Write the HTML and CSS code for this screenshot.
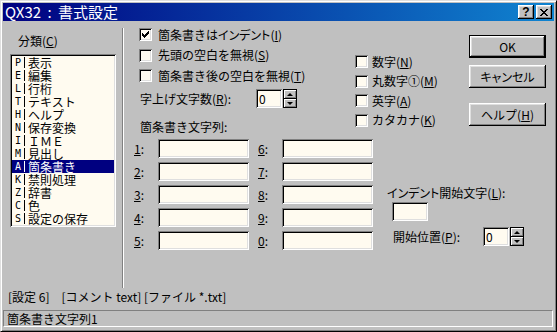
FILE: index.html
```html
<!DOCTYPE html>
<html lang="ja">
<head>
  <meta charset="UTF-8" />
  <title>QX32 : 書式設定</title>
  <link rel="stylesheet" href="styles.css">
</head>
<body>

<div class="window">
  <div class="titlebar">
    <span class="title">QX32 : 書式設定</span>
    <div class="title-buttons">
      <span class="tbtn tbtn-help">?</span>
      <span class="tbtn">
        <svg width="8" height="7" viewBox="0 0 8 7" shape-rendering="crispEdges"><path d="M0 0h2v1h-2zM6 0h2v1h-2zM1 1h2v1h-2zM5 1h2v1h-2zM2 2h4v1h-4zM3 3h2v1h-2zM2 4h4v1h-4zM1 5h2v1h-2zM5 5h2v1h-2zM0 6h2v1h-2zM6 6h2v1h-2z" fill="#000"/></svg>
      </span>
    </div>
  </div>

  <div class="content">
    <!-- category list -->
    <div class="category">
      <div class="cat-label">分類(<u>C</u>)</div>
      <ul class="listbox">
        <li><span class="key">P</span><span class="sep"></span>表示</li>
        <li><span class="key">E</span><span class="sep"></span>編集</li>
        <li><span class="key">L</span><span class="sep"></span>行桁</li>
        <li><span class="key">T</span><span class="sep"></span>テキスト</li>
        <li><span class="key">H</span><span class="sep"></span>ヘルプ</li>
        <li><span class="key">N</span><span class="sep"></span>保存変換</li>
        <li><span class="key">I</span><span class="sep"></span>ＩＭＥ</li>
        <li><span class="key">M</span><span class="sep"></span>見出し</li>
        <li class="selected"><span class="key">A</span><span class="sep"></span>箇条書き</li>
        <li><span class="key">K</span><span class="sep"></span>禁則処理</li>
        <li><span class="key">Z</span><span class="sep"></span>辞書</li>
        <li><span class="key">C</span><span class="sep"></span>色</li>
        <li><span class="key">S</span><span class="sep"></span>設定の保存</li>
      </ul>
    </div>

    <div class="vsep"></div>

    <div class="settings">
      <div class="top-section">
        <div class="options">
          <div class="check-list">
            <label class="check">
              <span class="box">
                <svg width="13" height="13" viewBox="0 0 13 13" shape-rendering="crispEdges"><path d="M9 3h1v1h-1zM8 4h2v1h-2zM3 5h1v1h-1zM7 5h3v1h-3zM3 6h2v1h-2zM6 6h3v1h-3zM3 7h5v1h-5zM4 8h3v1h-3zM5 9h1v1h-1z" fill="#000"/></svg>
              </span>
              <span class="text">箇条書きは<span class="p">インデント</span>(<u>I</u>)</span>
            </label>
            <label class="check"><span class="box"></span><span class="text">先頭の空白を無視(<u>S</u>)</span></label>
            <label class="check"><span class="box"></span><span class="text">箇条書き後の空白を無視(<u>T</u>)</span></label>
          </div>
          <div class="spin-row raise-row">
            <span class="spin-label">字上げ文字数(<u>R</u>):</span>
            <input class="field spin-input" type="text" value="0">
            <span class="spin-btns"><span class="spin-up"></span><span class="spin-down"></span></span>
          </div>
          <div class="bullets-label">箇条書き文字列:</div>
        </div>

        <div class="char-options">
          <label class="check"><span class="box"></span><span class="text">数字(<u>N</u>)</span></label>
          <label class="check"><span class="box"></span><span class="text">丸数字①(<u>M</u>)</span></label>
          <label class="check"><span class="box"></span><span class="text">英字(<u>A</u>)</span></label>
          <label class="check"><span class="box"></span><span class="text">カタカナ(<u>K</u>)</span></label>
        </div>

        <div class="actions">
          <button class="btn btn-default">OK</button>
          <button class="btn btn-cancel"><span class="p">キャンセル</span></button>
          <button class="btn btn-help">ヘルプ(<u>H</u>)</button>
        </div>
      </div>

      <div class="bottom-section">
        <div class="bullet-grid">
          <span class="num"><u>1</u>:</span><input class="field" type="text">
          <span class="num num-right"><u>6</u>:</span><input class="field" type="text">
          <span class="num"><u>2</u>:</span><input class="field" type="text">
          <span class="num num-right"><u>7</u>:</span><input class="field" type="text">
          <span class="num"><u>3</u>:</span><input class="field" type="text">
          <span class="num num-right"><u>8</u>:</span><input class="field" type="text">
          <span class="num"><u>4</u>:</span><input class="field" type="text">
          <span class="num num-right"><u>9</u>:</span><input class="field" type="text">
          <span class="num"><u>5</u>:</span><input class="field" type="text">
          <span class="num num-right"><u>0</u>:</span><input class="field" type="text">
        </div>

        <div class="indent">
          <div class="indent-label"><span class="p">インデント</span>開始文字(<u>L</u>):</div>
          <input class="field indent-char" type="text">
          <div class="spin-row start-row">
            <span class="start-label">開始位置(<u>P</u>):</span>
            <input class="field spin-input" type="text" value="0">
            <span class="spin-btns"><span class="spin-up"></span><span class="spin-down"></span></span>
          </div>
        </div>
      </div>
    </div>
  </div>

  <div class="status-text">[設定 6]　[コメント text] [ファイル *.txt]</div>
  <div class="statusbar">箇条書き文字列1</div>
</div>

</body>
</html>
```

FILE: styles.css
```css
html, body {
  margin: 0;
}

body {
  font-family: "Noto Sans CJK JP", sans-serif;
  font-size: 12px;
  line-height: 14px;
  color: #000;
  background: #c0c0c0;
}

u {
  text-underline-offset: 1px;
}

/* proportional kana, like the old P-gothic labels */
.p {
  font-feature-settings: "palt";
}

.window {
  width: 557px;
  height: 332px;
  box-sizing: border-box;
  border: 1px solid;
  border-color: #dfdfdf #000 #000 #dfdfdf;
  box-shadow: inset 1px 1px #fff, inset -1px -1px #808080;
  padding: 2px;
  background: #c0c0c0;
  display: flex;
  flex-direction: column;
}

/* title bar */
.titlebar {
  height: 18px;
  flex: none;
  display: flex;
  align-items: center;
  justify-content: space-between;
  padding: 0 2px;
  background: linear-gradient(90deg, #000080, #1084d0);
}

.title {
  color: #fff;
  font-size: 15px;
  line-height: 18px;
  word-spacing: 3px;
}

.title-buttons {
  display: flex;
  gap: 2px;
}

.tbtn {
  width: 16px;
  height: 14px;
  box-sizing: border-box;
  display: flex;
  align-items: center;
  justify-content: center;
  background: #c0c0c0;
  box-shadow: inset -1px -1px #000, inset 1px 1px #fff, inset -2px -2px #808080, inset 2px 2px #dfdfdf;
}

.tbtn-help {
  font-family: "Liberation Sans", sans-serif;
  font-weight: bold;
  font-size: 12px;
  line-height: 14px;
}

/* main area */
.content {
  height: 267px;
  flex: none;
  display: flex;
}

.category {
  width: 112px;
  padding-left: 7px;
}

.cat-label {
  padding: 13px 0 0 8px;
}

.listbox {
  list-style: none;
  margin: 6px 0 0;
  padding: 2px;
  width: 106px;
  height: 173px;
  box-sizing: border-box;
  background: #fffbf0;
  box-shadow: inset 1px 1px #808080, inset -1px -1px #fff, inset 2px 2px #000, inset -2px -2px #dfdfdf;
}

.listbox li {
  height: 13px;
  line-height: 13px;
  display: flex;
  align-items: center;
  white-space: nowrap;
}

.listbox .key {
  width: 9px;
  padding-left: 3px;
  font-family: "DejaVu Sans Mono", monospace;
  font-size: 10px;
}

.listbox .sep {
  width: 1px;
  height: 11px;
  background: #000;
  margin-right: 3px;
}

.listbox li.selected {
  background: #000080;
  color: #fff;
}

.listbox li.selected .sep {
  background: #fff;
}

.vsep {
  width: 0;
  height: 260px;
  margin-top: 7px;
  border-left: 1px solid #808080;
  border-right: 1px solid #fff;
}

.settings {
  flex: 1;
  display: flex;
  flex-direction: column;
}

.top-section {
  height: 118px;
  display: flex;
}

.options {
  width: 216px;
  padding: 7px 0 0 15px;
}

.check-list {
  display: flex;
  flex-direction: column;
  gap: 7.5px;
}

.check {
  display: flex;
  align-items: center;
  height: 13px;
  white-space: nowrap;
}

.box {
  width: 13px;
  height: 13px;
  flex: none;
  background: #fffbf0;
  box-shadow: inset 1px 1px #808080, inset -1px -1px #fff, inset 2px 2px #000, inset -2px -2px #dfdfdf;
}

.box svg {
  display: block;
}

.check .text {
  margin-left: 6px;
}

.field {
  display: block;
  box-sizing: border-box;
  height: 19px;
  margin: 0;
  border: none;
  padding: 2px 3px;
  font: inherit;
  color: #000;
  background: #fffbf0;
  box-shadow: inset 1px 1px #808080, inset -1px -1px #fff, inset 2px 2px #000, inset -2px -2px #dfdfdf;
  outline: none;
}

.spin-row {
  display: flex;
  align-items: center;
  height: 19px;
}

.raise-row {
  margin-top: 7px;
  padding-left: 1px;
}

.spin-label {
  width: 116px;
}

.spin-input {
  width: 26px;
}

.spin-btns {
  width: 14px;
  height: 19px;
  margin-left: 1px;
  box-sizing: border-box;
  border: 1px solid #000;
  display: flex;
  flex-direction: column;
  gap: 1px;
  background: #000;
}

.spin-up, .spin-down {
  flex: 1;
  display: flex;
  align-items: center;
  justify-content: center;
  background: #c0c0c0;
  box-shadow: inset 1px 1px #fff, inset -1px -1px #808080;
}

.spin-up::after, .spin-down::after {
  content: "";
  width: 0;
  height: 0;
  border-left: 3px solid transparent;
  border-right: 3px solid transparent;
}

.spin-up::after {
  border-bottom: 3px solid #000;
}

.spin-down::after {
  border-top: 3px solid #000;
}

.bullets-label {
  margin-top: 12px;
  padding-left: 1px;
}

.char-options {
  width: 114px;
  padding-top: 34px;
  display: flex;
  flex-direction: column;
  gap: 6.5px;
}

.char-options .check .text {
  margin-left: 4px;
}

.actions {
  width: 77px;
  padding-top: 14px;
  display: flex;
  flex-direction: column;
}

.btn {
  width: 77px;
  height: 23px;
  padding: 0;
  border: none;
  font: inherit;
  color: #000;
  background: #c0c0c0;
  box-shadow: inset -1px -1px #000, inset 1px 1px #fff, inset -2px -2px #808080, inset 2px 2px #dfdfdf;
}

.btn-default {
  box-shadow: inset 0 0 0 1px #000, inset -2px -2px #000, inset 2px 2px #fff, inset -3px -3px #808080, inset 3px 3px #dfdfdf;
}

.btn-cancel {
  margin-top: 7px;
}

.btn-help {
  margin-top: 15px;
}

/* bullet strings */
.bottom-section {
  display: flex;
}

.bullet-grid {
  margin-left: 10px;
  display: grid;
  grid-template-columns: 24px 91px 33px 91px;
  grid-auto-rows: 19px;
  row-gap: 4px;
  align-items: center;
}

.num-right {
  padding-left: 9px;
}

.indent {
  margin-left: 14px;
  padding-top: 47px;
}

.indent-char {
  width: 36px;
  margin: 2px 0 0 5px;
}

.start-row {
  margin-top: 6px;
  padding-left: 6px;
}

.start-label {
  width: 90px;
}

/* footer */
.status-text {
  margin-top: 2px;
  padding-left: 5px;
  height: 14px;
  white-space: nowrap;
}

.statusbar {
  margin: 6px 1px 0 0;
  height: 17px;
  box-sizing: border-box;
  border: 1px solid;
  border-color: #808080 #fff #fff #808080;
  padding-left: 3px;
  line-height: 15px;
}
```
